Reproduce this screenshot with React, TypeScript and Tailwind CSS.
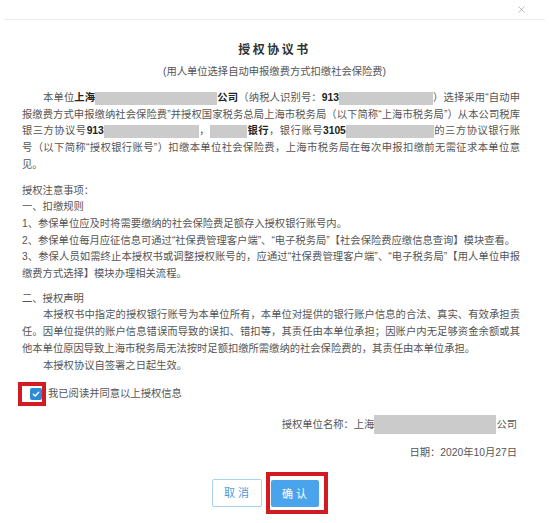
import React from "react";
import clsx from "clsx";
import { X } from "lucide-react";

// redacted block in the scanned agreement
function Mask({ className }: { className: string }) {
  return <span className={clsx("inline-block bg-[#cbcbcb] align-middle", className)} />;
}

function Line({
  children,
  last,
  indent,
}: {
  children: React.ReactNode;
  last?: boolean;
  indent?: boolean;
}) {
  return (
    <div
      className={clsx(
        last ? "text-left" : "text-justify [text-align-last:justify]",
        indent && "pl-[21px]"
      )}
    >
      {children}
    </div>
  );
}

export default function App() {
  return (
    <div className="w-[549px] h-[523px] bg-white text-[#555] [text-spacing-trim:space-all] font-['Liberation_Sans','Noto_Sans_CJK_SC',sans-serif] overflow-hidden">
      {/* header */}
      <div className="mx-[4px] h-[20px] flex items-center justify-end pr-[18px] border-b border-[#ececec]">
        <X size={11} strokeWidth={1.5} className="text-[#9a9a9a]" />
      </div>

      {/* title */}
      <div className="mt-[22px] text-center">
        <div className="text-[12px] leading-[16px] font-bold tracking-[2.5px] text-[#333]">
          授权协议书
        </div>
        <div className="mt-[6px] text-[10.3px] leading-[16px]">
          (用人单位选择自动申报缴费方式扣缴社会保险费)
        </div>
      </div>

      {/* body */}
      <div className="pl-[22px] pr-[29px] mt-[10px] text-[10.3px] leading-[16.7px]">
        <div>
          <Line indent>
            本单位<b className="text-[#222]">上海</b>
            <Mask className="w-[122px] h-[13px]" />
            <b className="text-[#222]">公司</b>（纳税人识别号：<b className="text-[#222]">913</b>
            <Mask className="w-[94px] h-[13px]" />
            ）选择采用“自动申
          </Line>
          <Line>报缴费方式申报缴纳社会保险费”并授权国家税务总局上海市税务局（以下简称“上海市税务局”）从本公司税库</Line>
          <Line>
            银三方协议号<b className="text-[#222]">913</b>
            <Mask className="w-[95px] h-[13px]" />
            ，
            <Mask className="w-[37px] h-[13px]" />
            <b className="text-[#222]">银行</b>，银行账号<b className="text-[#222]">3105</b>
            <Mask className="w-[88px] h-[13px]" />
            的三方协议银行账
          </Line>
          <Line>号（以下简称“授权银行账号”）扣缴本单位社会保险费，上海市税务局在每次申报扣缴前无需征求本单位意</Line>
          <Line last>见。</Line>
        </div>

        <div className="mt-[9px]">
          <Line last>授权注意事项：</Line>
          <Line last>一、扣缴规则</Line>
          <Line last>1、参保单位应及时将需要缴纳的社会保险费足额存入授权银行账号内。</Line>
          <Line last>2、参保单位每月应征信息可通过“社保费管理客户端”、“电子税务局”【社会保险费应缴信息查询】模块查看。</Line>
          <Line>3、参保人员如需终止本授权书或调整授权账号的，应通过“社保费管理客户端”、“电子税务局”【用人单位申报</Line>
          <Line last>缴费方式选择】模块办理相关流程。</Line>
        </div>

        <div className="mt-[8px]">
          <Line last>二、授权声明</Line>
          <Line indent>本授权书中指定的授权银行账号为本单位所有，本单位对提供的银行账户信息的合法、真实、有效承担责</Line>
          <Line>任。因单位提供的账户信息错误而导致的误扣、错扣等，其责任由本单位承担；因账户内无足够资金余额或其</Line>
          <Line last>他本单位原因导致上海市税务局无法按时足额扣缴所需缴纳的社会保险费的，其责任由本单位承担。</Line>
          <Line last indent>本授权协议自签署之日起生效。</Line>
        </div>
      </div>

      {/* agree checkbox */}
      <div className="mt-[8px] pl-[18px] flex items-center">
        <div className="w-[28px] h-[24px] border-[4px] border-[#d11a22] flex items-center pl-[8px]">
          <span className="w-[12px] h-[12px] rounded-[2px] bg-[#2f8ad6] flex items-center justify-center">
            <svg width="8" height="8" viewBox="0 0 8 8" fill="none">
              <path d="M1.3 4.2 L3.2 6 L6.7 2.2" stroke="white" strokeWidth="1.4" strokeLinecap="round" strokeLinejoin="round" />
            </svg>
          </span>
        </div>
        <span className="ml-[2px] text-[10.3px] leading-[16px]">我已阅读并同意以上授权信息</span>
      </div>

      {/* signature */}
      <div className="pr-[32px] text-right text-[10.3px]">
        <div className="mt-[9px] flex justify-end items-center leading-[19px]">
          授权单位名称：上海
          <Mask className="w-[122px] h-[19px]" />
          公司
        </div>
        <div className="mt-[10px] leading-[17px]">日期：2020年10月27日</div>
      </div>

      {/* buttons */}
      <div className="mt-[11px] flex justify-center items-center gap-[4px] pr-[10px]">
        <button className="w-[50px] h-[28px] border border-[#a9d2ef] rounded-[2px] text-[#4d9ad6] text-[11px] tracking-[3px] pl-[3px] bg-white">
          取消
        </button>
        <div className="border-[4px] border-[#d11a22] pt-[4px] pb-[3px] pl-[1px] pr-[5px]">
          <button className="w-[48px] h-[27px] rounded-[2px] bg-[#4aa4ec] text-white text-[11px] tracking-[3px] pl-[3px]">
            确认
          </button>
        </div>
      </div>
    </div>
  );
}
